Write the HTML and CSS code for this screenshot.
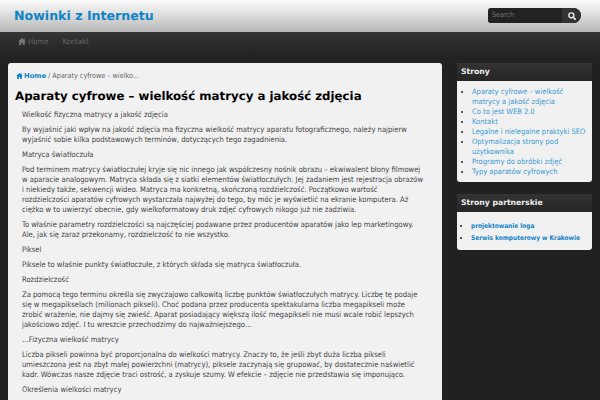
FILE: index.html
```html
<!DOCTYPE html>
<html lang="pl">
<head>
<meta charset="utf-8">
<title>Aparaty cyfrowe</title>
<link rel="stylesheet" href="styles.css">
</head>
<body>
<header class="top">
  <div class="logo">Nowinki z Internetu</div>
  <form class="search">
    <span class="search-text">Search</span>
    <span class="search-btn">
      <svg width="8" height="8" viewBox="0 0 10 10"><circle cx="4.2" cy="4.2" r="3.1" fill="none" stroke="#e8e8e8" stroke-width="1.8"/><path d="M6.6 6.6L9.2 9.2" stroke="#e8e8e8" stroke-width="2.1" stroke-linecap="round"/></svg>
    </span>
  </form>
</header>
<nav class="nav">
  <a class="nav-item"><svg class="home" width="8" height="7" viewBox="0 0 10 9"><path d="M5 0L0 4.5h1.4V9h2.6V6h2v3h2.6V4.5H10L8.4 3V.6H7.2v1.3z" fill="#777"/></svg>Home</a>
  <a class="nav-item">Kontakt</a>
</nav>
<div class="wrap">
  <main class="content">
    <div class="crumbs"><a class="crumb-home"><svg class="home" width="7" height="6" viewBox="0 0 10 9"><path d="M5 0L0 4.5h1.4V9h2.6V6h2v3h2.6V4.5H10L8.4 3V.6H7.2v1.3z" fill="#0f84c6"/></svg>Home</a> / Aparaty cyfrowe – wielko...</div>
    <h1 class="title">Aparaty cyfrowe – wielkość matrycy a jakość zdjęcia</h1>
    <div class="entry">
      <p class="lead">Wielkość fizyczna matrycy a jakość zdjęcia</p>
      <p>By wyjaśnić jaki wpływ na jakość zdjęcia ma fizyczna wielkość matrycy aparatu fotograficznego, należy najpierw wyjaśnić sobie kilka podstawowych terminów, dotyczących tego zagadnienia.</p>
      <p>Matryca światłoczuła</p>
      <p>Pod terminem matrycy światłoczułej kryje się nic innego jak współczesny nośnik obrazu – ekwiwalent błony filmowej w aparacie analogowym. Matryca składa się z siatki elementów światłoczułych. Jej zadaniem jest rejestracja obrazów i niekiedy także, sekwencji wideo. Matryca ma konkretną, skończoną rozdzielczość. Początkowo wartość rozdzielczości aparatów cyfrowych wystarczała najwyżej do tego, by móc je wyświetlić na ekranie komputera. Aż ciężko w to uwierzyć obecnie, gdy wielkoformatowy druk zdjęć cyfrowych nikogo już nie zadziwia.</p>
      <p>To właśnie parametry rozdzielczości są najczęściej podawane przez producentów aparatów jako lep marketingowy. Ale, jak się zaraz przekonamy, rozdzielczość to nie wszystko.</p>
      <p>Piksel</p>
      <p>Piksele to właśnie punkty światłoczułe, z których składa się matryca światłoczuła.</p>
      <p>Rozdzielczość</p>
      <p>Za pomocą tego terminu określa się zwyczajowo całkowitą liczbę punktów światłoczułych matrycy. Liczbę tę podaje się w megapikselach (milionach pikseli). Choć podana przez producenta spektakularna liczba megapikseli może zrobić wrażenie, nie dajmy się zwieść. Aparat posiadający większą ilość megapikseli nie musi wcale robić lepszych jakościowo zdjęć. I tu wreszcie przechodzimy do najważniejszego…</p>
      <p>…Fizyczna wielkość matrycy</p>
      <p>Liczba pikseli powinna być proporcjonalna do wielkości matrycy. Znaczy to, że jeśli zbyt duża liczba pikseli umieszczona jest na zbyt małej powierzchni (matrycy), piksele zaczynają się grupować, by dostatecznie naświetlić kadr. Wówczas nasze zdjęcie traci ostrość, a zyskuje szumy. W efekcie – zdjęcie nie przedstawia się imponująco.</p>
      <p>Określenia wielkości matrycy</p>
    </div>
  </main>
  <aside class="side">
    <section class="widget">
      <h3 class="widget-title">Strony</h3>
      <ul class="widget-list">
        <li><a>Aparaty cyfrowe – wielkość matrycy a jakość zdjęcia</a></li>
        <li><a>Co to jest WEB 2.0</a></li>
        <li><a>Kontakt</a></li>
        <li><a>Legalne i nielegalne praktyki SEO</a></li>
        <li><a>Optymalizacja strony pod użytkownika</a></li>
        <li><a>Programy do obróbki zdjęć</a></li>
        <li><a>Typy aparatów cyfrowych</a></li>
      </ul>
    </section>
    <section class="widget">
      <h3 class="widget-title">Strony partnerskie</h3>
      <ul class="widget-list partners">
        <li><a>projektowanie loga</a></li>
        <li><a>Serwis komputerowy w Krakowie</a></li>
      </ul>
    </section>
  </aside>
</div>
</body>
</html>
```
FILE: styles.css
```css
html, body { margin: 0; padding: 0; }
body {
  height: 400px;
  overflow: hidden;
  background: #212121;
  font-family: "DejaVu Sans Condensed", "DejaVu Sans", sans-serif;
  font-size: 8px;
  line-height: 10px;
  color: #444;
  text-rendering: geometricPrecision;
}
.top {
  height: 32px;
  box-sizing: border-box;
  display: flex;
  justify-content: space-between;
  align-items: center;
  padding: 0 19px 1px 14px;
  background: linear-gradient(#fcfcfc, #b8b8b8);
}
.logo {
  font-family: "DejaVu Sans", sans-serif;
  font-size: 12.6px;
  font-weight: bold;
  color: #0f84c6;
}
.search {
  width: 93px;
  height: 15px;
  display: flex;
  justify-content: space-between;
  background: #222;
  border-radius: 3px 8px 8px 3px;
}
.search-text {
  padding-left: 4px;
  font-size: 7.2px;
  line-height: 14px;
  color: #777;
}
.search-btn {
  width: 19px;
  display: flex;
  align-items: center;
  justify-content: center;
  background: #333;
  border-radius: 0 8px 8px 0;
}
.nav {
  height: 31px;
  display: flex;
  gap: 14px;
  padding: 4px 0 0 18px;
  box-sizing: border-box;
  align-items: flex-start;
  background: linear-gradient(#353535, #222 80%);
}
.nav-item { font-size: 7.7px; line-height: 12px; color: #666; }
.home { margin-right: 2px; vertical-align: -0.5px; }
.wrap {
  display: flex;
  gap: 15px;
  padding: 0 8px;
  align-items: flex-start;
}
.content {
  width: 434px;
  flex: none;
  box-sizing: border-box;
  padding: 7px 17px 7px 7px;
  height: 340px;
  background: #f1f1f1;
  border-radius: 3px 3px 0 0;
}
.crumbs { font-size: 7.2px; color: #666; line-height: 12px; padding: 0 0 0 1px; }
.crumb-home { font-family: "DejaVu Sans", sans-serif; font-size: 6.8px; font-weight: bold; color: #0f84c6; }
.crumb-home .home { margin-right: 1px; }
.title {
  margin: 6px 0 6px;
  font-family: "DejaVu Sans", sans-serif;
  font-size: 11.8px;
  line-height: 16px;
  font-weight: bold;
  color: #000;
}
.entry { padding-left: 7px; font-size: 7.6px; }
.entry p { margin: 0 0 5px; }
.side { flex: 1; min-width: 0; }
.widget { margin-bottom: 12px; }
.widget-title {
  margin: 0;
  height: 18px;
  padding-left: 4px;
  font-family: "DejaVu Sans", sans-serif;
  font-size: 7.7px;
  line-height: 17px;
  font-weight: bold;
  color: #eee;
  background: linear-gradient(#333, #252525);
}
.widget-list {
  margin: 0;
  padding: 6px 4px 5px 15px;
  font-size: 7.5px;
  line-height: 10px;
  background: #f1f1f1;
  border-radius: 0 0 3px 3px;
  color: #222;
}
.widget-list a { color: #3a9ad2; }
.partners { padding: 9px 4px 5px 14px; }
.partners li { margin-bottom: 2px; }
.partners a { color: #0f84c6; font-weight: bold; font-size: 6.5px; }
```
